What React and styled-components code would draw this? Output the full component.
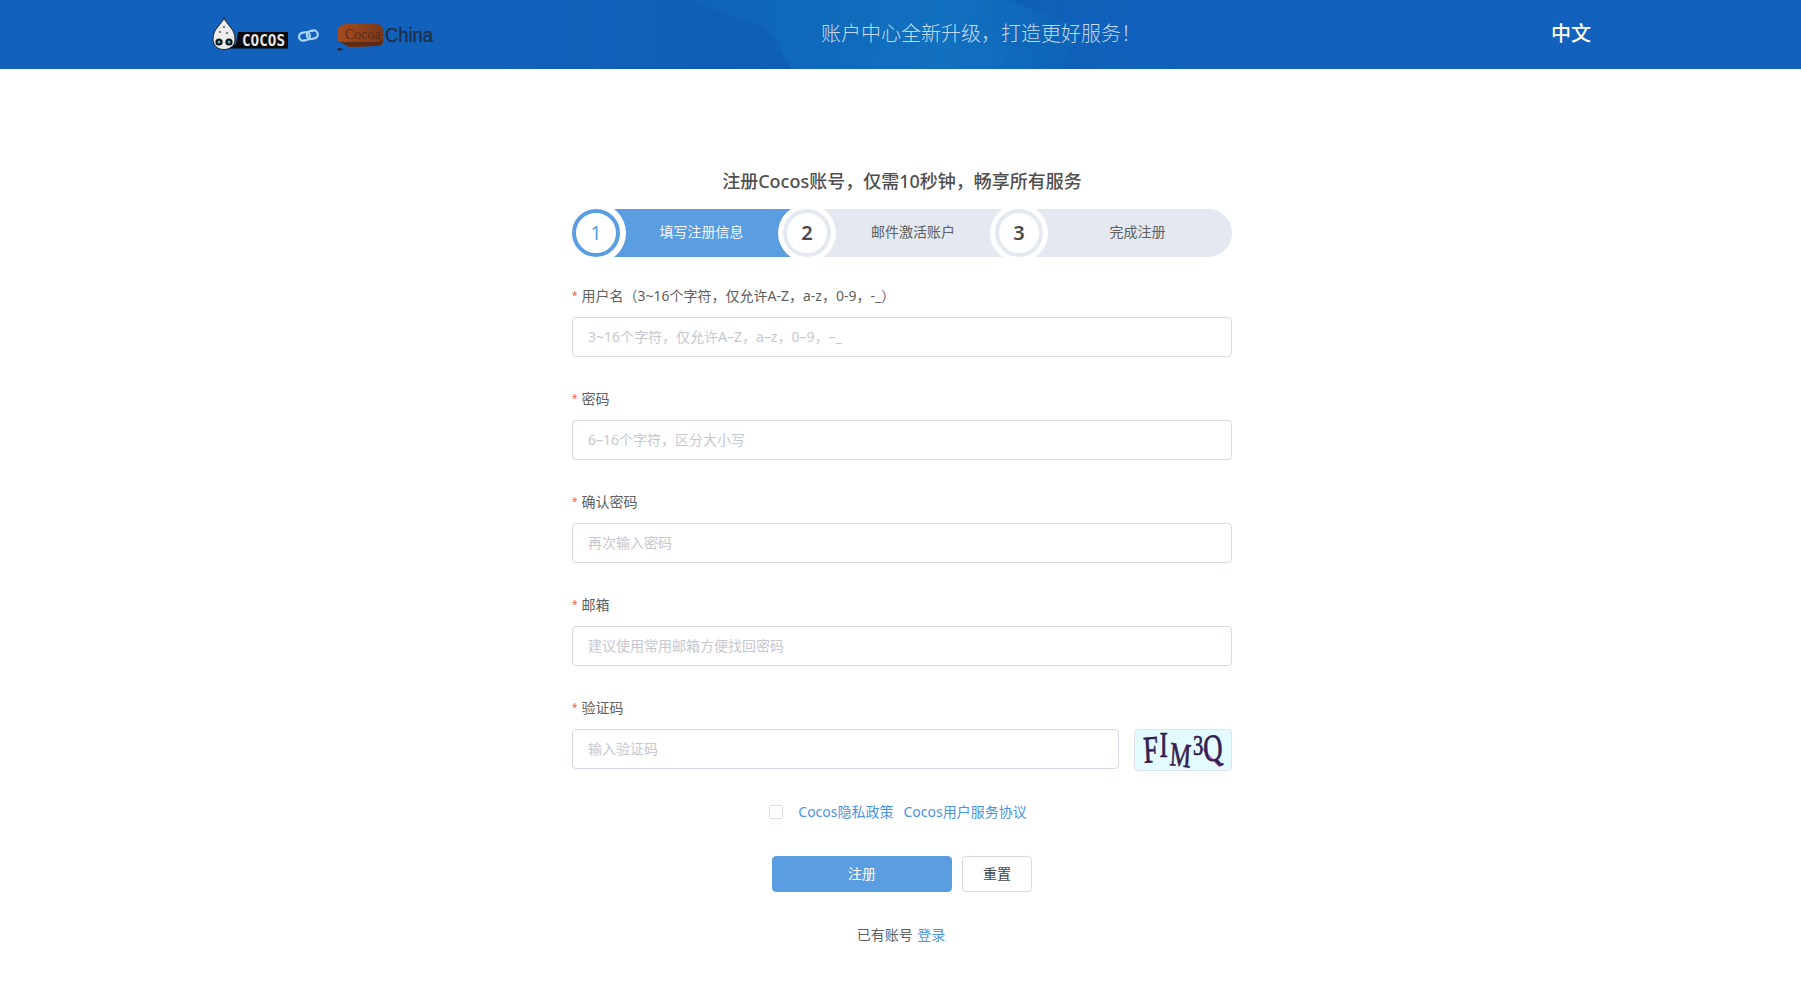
import React from "react";
import styled, { createGlobalStyle } from "styled-components";

const FONT = `"Noto Sans", "Noto Sans CJK SC", sans-serif`;

const Global = createGlobalStyle`
  html, body { margin: 0; padding: 0; background: #fff; }
  body { font-family: ${FONT}; color: #555; }
  * { box-sizing: border-box; }
`;

const Page = styled.div`
  width: 100%;
  min-height: 983px;
  display: flex;
  flex-direction: column;
`;

const Header = styled.header`
  position: relative;
  height: 69px;
  overflow: hidden;
  background: #1161bd;
  display: flex;
  align-items: center;
  color: #fff;
`;

const HeaderArt = styled.svg`
  position: absolute;
  inset: 0;
  width: 100%;
  height: 100%;
`;

const HeaderInner = styled.div`
  position: relative;
  width: 100%;
  display: flex;
  align-items: center;
  padding: 0 210px 0 209px;
`;

const LogoBox = styled.svg`
  width: 226px;
  height: 40px;
  flex: none;
  margin-top: 3px;
  overflow: visible;
`;

const Message = styled.div`
  margin-left: 386px;
  font-size: 20px;
  font-weight: 300;
  color: rgba(255, 255, 255, 0.75);
  line-height: 28px;
  margin-top: -2px;
`;

const Lang = styled.div`
  margin-left: auto;
  font-size: 20px;
  font-weight: 500;
  line-height: 28px;
  margin-top: -2px;
`;

const Form = styled.main`
  width: 660px;
  margin: 0 0 0 572px;
  padding-top: 99px;
  display: flex;
  flex-direction: column;
`;

const Title = styled.h1`
  margin: 0;
  text-align: center;
  font-size: 18px;
  line-height: 26px;
  font-weight: 500;
  color: #505050;
`;

const Steps = styled.div`
  margin-top: 15px;
  height: 48px;
  display: flex;
  background: #e4e9f1;
  border-radius: 24px;
`;

const Step = styled.div`
  width: ${(p) => (p.$w ? `${p.$w}px` : "auto")};
  flex: ${(p) => (p.$w ? "none" : 1)};
  display: flex;
  align-items: center;
  background: ${(p) => (p.$active ? "#5a9de0" : "transparent")};
  border-radius: 24px 0 0 24px;
  font-size: 14px;
  font-weight: 400;
  color: ${(p) => (p.$active ? "#f2f7fd" : "#606060")};
  padding-right: ${(p) => (p.$active ? "10px" : 0)};
  margin-right: ${(p) => (p.$active ? "-10px" : 0)};
`;

const Circle = styled.span`
  width: 48px;
  height: 48px;
  flex: none;
  border-radius: 50%;
  background: #fff;
  border: 4px solid ${(p) => (p.$active ? "#5a9de0" : "#e4e9f1")};
  box-shadow: 0 0 0 ${(p) => (p.$active ? "6px" : "5px")} #fff;
  display: flex;
  align-items: center;
  justify-content: center;
  padding-bottom: 2px;
  font-size: 20px;
  font-weight: ${(p) => (p.$active ? 400 : 600)};
  color: ${(p) => (p.$active ? "#5a9de0" : "#4a4a4a")};
  position: relative;
  z-index: 1;
`;

const StepText = styled.span`
  flex: 1;
  text-align: center;
  margin-top: -4px;
`;

const Fields = styled.div`
  margin-top: 28px;
  display: flex;
  flex-direction: column;
  gap: 31px;
`;

const Field = styled.label`
  display: flex;
  flex-direction: column;
  gap: 10px;
`;

const LabelText = styled.span`
  font-size: 14px;
  line-height: 21px;
  font-weight: 400;
  color: #606060;
  &::before {
    content: "*";
    color: #f0614a;
    margin-right: 4px;
    font-family: "Liberation Sans", sans-serif;
  }
`;

const Input = styled.input`
  width: 100%;
  height: 40px;
  padding: 0 15px 2px;
  border: 1px solid #d8dae6;
  border-radius: 4px;
  outline: none;
  background: #fff;
  font-family: ${FONT};
  font-size: 14px;
  font-weight: 400;
  &::placeholder { color: #c5c8d0; opacity: 1; }
`;

const CaptchaRow = styled.div`
  display: flex;
  gap: 15px;
  align-items: flex-start;
`;

const CaptchaImage = styled.svg`
  width: 98px;
  height: 42px;
  flex: none;
  border: 1px solid #dfe2ec;
  border-radius: 4px;
  background: #e4fbfd;
  overflow: visible;
`;

const CaptchaText = styled.text`
  font-family: "Liberation Serif", serif;
  fill: #33204f;
  stroke: #33204f;
  stroke-width: 0.7px;
`;

const Agreement = styled.div`
  margin-top: 30px;
  display: flex;
  align-items: center;
  justify-content: center;
  padding-right: 8px;
  font-size: 14px;
  line-height: 21px;
  font-weight: 400;
`;

const Box = styled.span`
  width: 14px;
  height: 14px;
  border: 1px solid #d8dae6;
  border-radius: 2px;
  background: #fff;
  margin-right: 15px;
  flex: none;
`;

const Link = styled.a`
  color: #4a94e0;
  margin-left: ${(p) => p.$gap || 0}px;
`;

const Buttons = styled.div`
  margin-top: 34px;
  display: flex;
  gap: 10px;
  padding-left: 200px;
`;

const Button = styled.button`
  height: 36px;
  width: ${(p) => p.$w}px;
  border-radius: 4px;
  border: 1px solid ${(p) => (p.$primary ? "#5a9de0" : "#d8dae6")};
  background: ${(p) => (p.$primary ? "#5a9de0" : "#fff")};
  color: ${(p) => (p.$primary ? "#fff" : "#444")};
  font-family: ${FONT};
  font-size: 14px;
  font-weight: 400;
  padding: 0 0 2px;
`;

const LoginLine = styled.div`
  margin-top: 32px;
  padding-right: 2px;
  text-align: center;
  font-size: 14px;
  line-height: 21px;
  font-weight: 400;
  color: #606060;
`;

const STEPS = [
  { n: 1, t: "填写注册信息", w: 221, active: true },
  { n: 2, t: "邮件激活账户", w: 212 },
  { n: 3, t: "完成注册" },
];

const FIELDS = [
  { l: "用户名（3~16个字符，仅允许A-Z，a-z，0-9，-_）", p: "3~16个字符，仅允许A–Z，a–z，0–9，–_" },
  { l: "密码", p: "6–16个字符，区分大小写" },
  { l: "确认密码", p: "再次输入密码" },
  { l: "邮箱", p: "建议使用常用邮箱方便找回密码" },
];

export default function App() {
  return (
    <Page>
      <Global />
      <Header>
        <HeaderArt viewBox="0 0 1801 69" preserveAspectRatio="none">
          <defs>
            <linearGradient id="dark" x1="0" x2="1" y1="0" y2="0">
              <stop offset="0" stopColor="#0e5eb6" stopOpacity="0" />
              <stop offset="1" stopColor="#0e5eb6" />
            </linearGradient>
            <linearGradient id="light" x1="0" x2="1" y1="0" y2="0">
              <stop offset="0" stopColor="#0e63b8" />
              <stop offset="0.65" stopColor="#116fbe" />
              <stop offset="1" stopColor="#0e63b7" />
            </linearGradient>
            <linearGradient id="deep" x1="0" x2="1" y1="0" y2="0">
              <stop offset="0" stopColor="#0d60b4" />
              <stop offset="1" stopColor="#1161bd" stopOpacity="0" />
            </linearGradient>
            <linearGradient id="brown" x1="0" x2="1" y1="0" y2="0">
              <stop offset="0" stopColor="#a54c20" />
              <stop offset="1" stopColor="#7a3819" />
            </linearGradient>
          </defs>
          <polygon points="470,0 688,0 767,28 792,69 500,69" fill="url(#dark)" />
          <polygon points="1010,0 1240,0 1190,69 1060,69 1080,30" fill="url(#deep)" />
          <polygon points="688,0 1010,0 1080,30 1060,69 792,69 767,28" fill="url(#light)" />
          <polygon points="880,0 950,0 1010,50 1000,69 870,69" fill="#1475c2" opacity="0.25" />
        </HeaderArt>
        <HeaderInner>
          <LogoBox viewBox="0 0 226 40">
            <path d="M15 1.5 C17 9 26 12 26 23 C26 30 21 33.5 15 33.5 C8 33.5 4 29 4 23 C4 12 13 9 15 1.5Z" fill="#ececec" stroke="#222" strokeWidth="1" />
            <circle cx="10" cy="26" r="3.6" fill="#111" />
            <circle cx="20" cy="26" r="3.6" fill="#111" />
            <circle cx="10" cy="26" r="1.5" fill="#3fb6d8" />
            <circle cx="20" cy="26" r="1.5" fill="#3fb6d8" />
            <circle cx="15" cy="11" r="1" fill="#555" />
            <circle cx="11" cy="16" r="1" fill="#555" />
            <circle cx="18" cy="17" r="1" fill="#555" />
            <path d="M29 16 H79 V32.5 H20 L27 28Z" fill="#0a0a0a" />
            <text x="33" y="29.5" fontFamily="'DejaVu Sans Mono', monospace" fontSize="15" fontWeight="700" fill="#e8e8e8" textLength="43" lengthAdjust="spacingAndGlyphs">COCOS</text>
            <g fill="none" stroke="#a9d4f5" strokeWidth="2.2" transform="rotate(-12 100 20)">
              <rect x="90" y="15.5" width="11" height="8" rx="4" />
              <rect x="98" y="15.5" width="11" height="8" rx="4" />
            </g>
            <path d="M129 13 Q131 8 139 8 L167 8 Q174 8 174 15 L174 25 Q174 30 167 30 L140 31 L135 26 L129 25Z" fill="url(#brown)" />
            <path d="M131 26 L167 26 Q172 26 174 23 L174 25 Q174 30 167 30 L140 31Z" fill="#5e2a12" />
            <path d="M128 32 L135 33 L130 35Z" fill="#3a2010" />
            <text x="136" y="23" fontFamily="'Liberation Serif', serif" fontSize="14" fill="#5f2c14">Cocoa</text>
            <text x="176" y="25.5" fontFamily="'Liberation Sans', sans-serif" fontSize="20" fill="#1f3044" stroke="#1f3044" strokeWidth="0.3" textLength="48" lengthAdjust="spacingAndGlyphs">China</text>
          </LogoBox>
          <Message>账户中心全新升级，打造更好服务！</Message>
          <Lang>中文</Lang>
        </HeaderInner>
      </Header>
      <Form>
        <Title>注册Cocos账号，仅需10秒钟，畅享所有服务</Title>
        <Steps>
          {STEPS.map((s) => (
            <Step key={s.n} $w={s.w} $active={s.active}>
              <Circle $active={s.active}>{s.n}</Circle>
              <StepText>{s.t}</StepText>
            </Step>
          ))}
        </Steps>
        <Fields>
          {FIELDS.map((f) => (
            <Field key={f.l}>
              <LabelText>{f.l}</LabelText>
              <Input placeholder={f.p} />
            </Field>
          ))}
          <Field>
            <LabelText>验证码</LabelText>
            <CaptchaRow>
              <Input placeholder="输入验证码" />
              <CaptchaImage viewBox="0 0 96 40">
                <path d="M66 17 Q76 28 85 37" fill="none" stroke="#d65ac8" strokeWidth="1.4" />
                <g transform="scale(0.7 1)">
                  <CaptchaText>
                    <tspan x="13" y="33" fontSize="38" rotate="-4">F</tspan>
                    <tspan x="35" y="27" fontSize="36">I</tspan>
                    <tspan x="49" y="35" fontSize="34" rotate="5">M</tspan>
                    <tspan x="83" y="25" fontSize="29">3</tspan>
                    <tspan x="99" y="32" fontSize="38" rotate="-6">Q</tspan>
                  </CaptchaText>
                </g>
              </CaptchaImage>
            </CaptchaRow>
          </Field>
        </Fields>
        <Agreement>
          <Box />
          <Link>Cocos隐私政策</Link>
          <Link $gap={10}>Cocos用户服务协议</Link>
        </Agreement>
        <Buttons>
          <Button $primary $w={180}>注册</Button>
          <Button $w={70}>重置</Button>
        </Buttons>
        <LoginLine>
          已有账号 <Link $gap={1}>登录</Link>
        </LoginLine>
      </Form>
    </Page>
  );
}
